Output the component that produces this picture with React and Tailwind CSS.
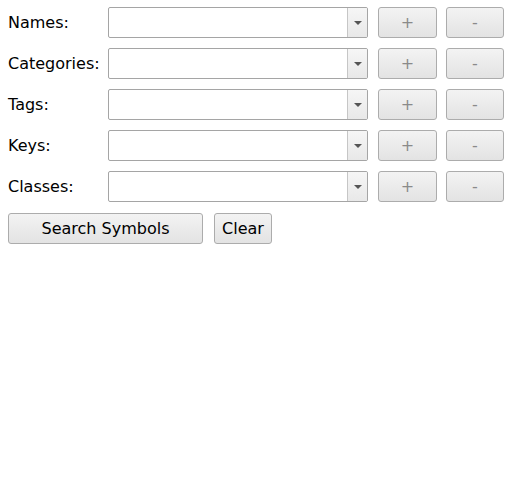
import React from "react";

const fields = ["Names:", "Categories:", "Tags:", "Keys:", "Classes:"];

const btn =
  "h-[31px] rounded-[3px] border border-[#acacac] bg-gradient-to-b from-[#f3f3f3] to-[#e3e3e3] text-[16px] leading-none";

const Row = ({ label }) => (
  <div className="flex items-center h-[31px]">
    <div className="w-[100px] text-[16px] text-black">{label}</div>
    <div className="flex w-[260px] h-[31px] rounded-[2px] border border-[#a5a5a5] bg-white overflow-hidden">
      <div className="flex-1" />
      <div className="w-[20px] h-full border-l border-[#c6c6c6] bg-gradient-to-b from-[#f6f6f6] to-[#e8e8e8] flex items-center justify-center">
        <div className="w-0 h-0 border-l-[4px] border-r-[4px] border-t-[4px] border-l-transparent border-r-transparent border-t-[#555]" />
      </div>
    </div>
    <button className={`${btn} w-[59px] ml-[10px] text-[#8a8a8a]`}>+</button>
    <button className={`${btn} w-[58px] ml-[9px] text-[#8a8a8a]`}>-</button>
  </div>
);

export default function App() {
  return (
    <div
      className="w-[505px] h-[501px] bg-white pl-[8px] pt-[7px] flex flex-col gap-[10px]"
      style={{ fontFamily: '"DejaVu Sans", Verdana, sans-serif' }}
    >
      {fields.map((f) => (
        <Row key={f} label={f} />
      ))}
      <div className="flex gap-[11px] mt-[1px]">
        <button className={`${btn} w-[195px] text-black`}>Search Symbols</button>
        <button className={`${btn} w-[58px] text-black`}>Clear</button>
      </div>
    </div>
  );
}
